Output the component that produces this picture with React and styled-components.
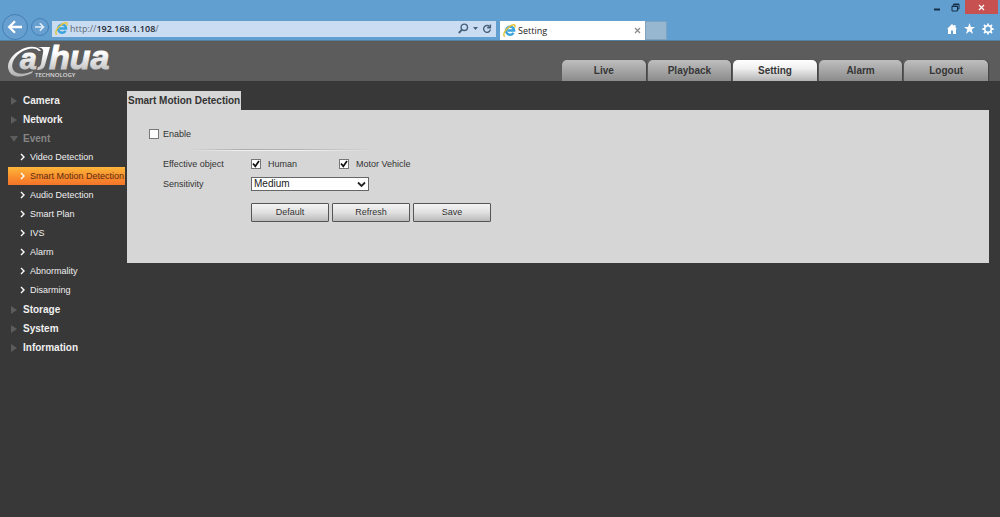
import React, { useState } from 'react'
import styled, { createGlobalStyle } from 'styled-components'

const menu = [
  { name: 'Camera' },
  { name: 'Network' },
  {
    name: 'Event',
    items: ['Video Detection', 'Smart Motion Detection', 'Audio Detection', 'Smart Plan', 'IVS', 'Alarm', 'Abnormality', 'Disarming'],
  },
  { name: 'Storage' },
  { name: 'System' },
  { name: 'Information' },
]

const tabs = ['Live', 'Playback', 'Setting', 'Alarm', 'Logout']

function IeIcon() {
  return (
    <svg width="13" height="13" viewBox="0 0 13 13" aria-hidden="true">
      <path d="M10.6 8.8a4.100 4.100 0 1 1 .6-2.300H4.400" fill="none" stroke="#3ba3dc" strokeWidth="2.300" />
      <path d="M2.200 11.800C.4 12.600.2 10.400 2 7.400 4 4 8.300 .8 10.800 .8c1.500 0 1.600 1.300 .8 2.800" fill="none" stroke="#e3c53c" strokeWidth="1.400" />
    </svg>
  )
}

function Logo() {
  return (
    <LogoSvg width="108" height="40" viewBox="0 0 108 40" role="img" aria-label="alhua technology">
      <defs>
        <linearGradient id="silver" gradientUnits="userSpaceOnUse" x1="0" y1="6" x2="0" y2="34">
          <stop offset="0.2" stopColor="#ffffff" />
          <stop offset="1" stopColor="#b4b4b4" />
        </linearGradient>
      </defs>
      <path
        d="M34 10C31 5 21 4 12 10 3 15-1 24 2 30c3 7 14 7 23 2l1-2c-7 3-15 4-19 0-4-5-1-13 6-18 7-5 15-6 19-2z"
        fill="url(#silver)"
      />
      <path d="M31 6h12l-5 18c-1 4-4 5-8 5l1-3c2 0 2-1 3-3l2-11c1-4-1-5-5-6z" fill="url(#silver)" />
      <LogoText x="13" y="28" $size={30}>a</LogoText>
      <LogoText x="42" y="28" $size={34}>hua</LogoText>
      <LogoSmall x="28" y="36">TECHNOLOGY</LogoSmall>
    </LogoSvg>
  )
}

function Check({ id, label, value, onChange, $tight }) {
  return (
    <CheckLabel htmlFor={id} $tight={$tight}>
      <CheckBox id={id} type="checkbox" checked={value} onChange={(e) => onChange(e.target.checked)} />
      {value && (
        <Tick width="10" height="10" viewBox="0 0 10 10">
          <path d="M2 4.500L4.300 7.300 8 2" fill="none" stroke="#111" strokeWidth="1.700" />
        </Tick>
      )}
      {label}
    </CheckLabel>
  )
}

function Browser() {
  return (
    <Chrome>
      <WindowBar>
        <WinButton aria-label="Minimize">
          <svg width="8" height="10" viewBox="0 0 8 10"><path d="M1 7.500h6" stroke="#17304a" strokeWidth="2" /></svg>
        </WinButton>
        <WinButton aria-label="Restore">
          <svg width="9" height="9" viewBox="0 0 9 9" fill="none" stroke="#17304a">
            <path d="M1 3h5.500v5H1zM2.500 2.500v-1.500h5.500v5h-1.500M1 3.500h5.500M2.500 1.500h5.500" />
          </svg>
        </WinButton>
        <WinButton $close aria-label="Close">
          <svg width="7" height="7" viewBox="0 0 7 7"><path d="M1 1l5 5M6 1L1 6" stroke="#fff" strokeWidth="1.300" /></svg>
        </WinButton>
      </WindowBar>
      <NavRow>
        <RoundButton $size={26} aria-label="Back">
          <svg width="16" height="14" viewBox="0 0 16 14" fill="none" stroke="#fff" strokeWidth="2.300"><path d="M15 7H2.500M8 1.200L2.200 7 8 12.800" /></svg>
        </RoundButton>
        <RoundButton $size={18} aria-label="Forward">
          <svg width="10" height="10" viewBox="0 0 10 10" fill="none" stroke="#e4eff9" strokeWidth="1.500"><path d="M0 5h8.500M4.800 1.200L8.600 5 4.800 8.800" /></svg>
        </RoundButton>
        <Address>
          <IeIcon />
          <Url>http://<b>192.168.1.108</b>/</Url>
          <AddressTools>
            <svg width="11" height="11" viewBox="0 0 11 11" fill="none" stroke="#45617c" strokeWidth="1.400"><circle cx="6.300" cy="4.300" r="3.200" /><path d="M4 6.700L.8 10" strokeWidth="1.800" /></svg>
            <svg width="5" height="4" viewBox="0 0 5 4"><path d="M0 0h5L2.500 3z" fill="#45617c" /></svg>
            <svg width="10" height="10" viewBox="0 0 10 10" fill="none" stroke="#45617c" strokeWidth="1.400"><path d="M7.600 2.700A3.400 3.400 0 1 0 8.400 5.500" /><path d="M8.400 .5v3.200H5.200" /></svg>
          </AddressTools>
        </Address>
        <PageTab>
          <IeIcon />
          <span>Setting</span>
          <TabClose aria-label="Close tab">
            <svg width="7" height="7" viewBox="0 0 7 7"><path d="M1 1l5 5M6 1L1 6" stroke="#8b8b8b" strokeWidth="1.300" /></svg>
          </TabClose>
        </PageTab>
        <NewTab aria-label="New tab" />
        <Tools>
          <svg width="10" height="10" viewBox="0 0 10 10" fill="#fff"><path d="M5 0L0 5h1v5h3V6.500h2V10h3V5h1L8.500 3.500V1H7v1z" /></svg>
          <svg width="11" height="11" viewBox="0 0 11 11" fill="#fff"><path d="M5.500 0l1.400 3.900H11L7.700 6.500 9 11 5.500 8.300 2 11l1.300-4.500L0 3.900h4.100z" /></svg>
          <svg width="12" height="12" viewBox="0 0 12 12" fill="none" stroke="#fff">
            <circle cx="6" cy="6" r="3.300" strokeWidth="1.600" />
            <path d="M6 .4v2M6 9.600v2M.4 6h2M9.600 6h2M2 2l1.400 1.400M8.600 8.600L10 10M10 2L8.600 3.400M3.400 8.600L2 10" strokeWidth="1.800" />
          </svg>
        </Tools>
      </NavRow>
    </Chrome>
  )
}

function SideMenu({ selected, onSelect }) {
  return (
    <Side>
      {menu.map((group) => (
        <React.Fragment key={group.name}>
          <GroupLink href="#" $open={!!group.items}>
            <svg width="8" height="8" viewBox="0 0 8 8">
              <path d={group.items ? 'M0 1h8L4 7z' : 'M1 0l6 4-6 4z'} fill="#5c5c5c" />
            </svg>
            {group.name}
          </GroupLink>
          {group.items && group.items.map((item) => (
            <ItemLink key={item} href="#" $active={item === selected} onClick={() => onSelect(item)}>
              <svg width="5" height="8" viewBox="0 0 5 8"><path d="M1 1l3 3-3 3" fill="none" stroke="#fff" strokeWidth="1.400" /></svg>
              {item}
            </ItemLink>
          ))}
        </React.Fragment>
      ))}
    </Side>
  )
}

function App() {
  const [tab, setTab] = useState('Setting')
  const [item, setItem] = useState('Smart Motion Detection')
  const [enable, setEnable] = useState(false)
  const [human, setHuman] = useState(true)
  const [vehicle, setVehicle] = useState(true)
  const [level, setLevel] = useState('Medium')

  return (
    <>
      <GlobalStyle />
      <Browser />
      <Header>
        <Logo />
        <MainTabs>
          {tabs.map((t) => (
            <MainTab key={t} $active={t === tab} onClick={() => setTab(t)}>{t}</MainTab>
          ))}
        </MainTabs>
      </Header>
      <Body>
        <SideMenu selected={item} onSelect={setItem} />
        <Content>
          <PanelTitle>Smart Motion Detection</PanelTitle>
          <Panel>
            <Check id="enable" label="Enable" value={enable} onChange={setEnable} $tight />
            <Divider />
            <Form>
              <span>Effective object</span>
              <Checks>
                <Check id="human" label="Human" value={human} onChange={setHuman} />
                <Check id="vehicle" label="Motor Vehicle" value={vehicle} onChange={setVehicle} />
              </Checks>
              <label htmlFor="sensitivity">Sensitivity</label>
              <SelectWrap>
                <Select id="sensitivity" value={level} onChange={(e) => setLevel(e.target.value)}>
                  <option>Low</option>
                  <option>Medium</option>
                  <option>High</option>
                </Select>
                <Arrow width="9" height="7" viewBox="0 0 9 7">
                  <path d="M1 1.500l3.500 3.500L8 1.500" fill="none" stroke="#222" strokeWidth="1.800" />
                </Arrow>
              </SelectWrap>
            </Form>
            <Buttons>
              <Button>Default</Button>
              <Button>Refresh</Button>
              <Button>Save</Button>
            </Buttons>
          </Panel>
        </Content>
      </Body>
    </>
  )
}

export default App

const GlobalStyle = createGlobalStyle`
  * {
    box-sizing: border-box;
  }
  body {
    margin: 0;
    background-color: #383838;
    font-family: "Liberation Sans", Arial, sans-serif;
    font-size: 9px;
  }
  button, select, input {
    font-family: inherit;
    margin: 0;
    padding: 0;
  }
  svg {
    flex-shrink: 0;
  }
`
const Chrome = styled.div`
  background-color: #629fd1;
  border-bottom: 1px solid #55819f;
  font-family: "Open Sans", "Noto Sans", sans-serif;
`
const WindowBar = styled.div`
  display: flex;
  justify-content: flex-end;
  height: 14px;
  padding-right: 2px;
`
const WinButton = styled.button`
  display: flex;
  align-items: center;
  justify-content: center;
  width: ${(p) => (p.$close ? '33px' : '19px')};
  height: 14px;
  border: none;
  background-color: ${(p) => (p.$close ? '#c75050' : 'transparent')};
`
const NavRow = styled.div`
  display: flex;
  align-items: center;
  height: 26px;
  padding-left: 2px;
`
const RoundButton = styled.button`
  display: flex;
  align-items: center;
  justify-content: center;
  width: ${(p) => p.$size}px;
  height: ${(p) => p.$size}px;
  margin-right: 3px;
  border: 1px solid #4480b4;
  border-radius: 50%;
  background-color: #679fd0;
`
const Address = styled.div`
  display: flex;
  align-items: center;
  flex: 0 1 444px;
  height: 16px;
  margin-top: 3px;
  padding: 0 4px 0 3px;
  background-color: #c9dcf1;
`
const Url = styled.span`
  margin-left: 2px;
  font-size: 9px;
  color: #5d6b7a;
  b {
    font-weight: 600;
    color: #1c2733;
  }
`
const AddressTools = styled.span`
  display: flex;
  align-items: center;
  gap: 4px;
  margin-left: auto;
`
const PageTab = styled.div`
  display: flex;
  align-items: center;
  flex: 0 1 145px;
  height: 19px;
  margin: 6px 0 0 4px;
  padding: 0 4px 0 3px;
  gap: 2px;
  background-color: #fff;
  font-size: 9px;
  color: #222;
`
const TabClose = styled.button`
  display: flex;
  margin-left: auto;
  border: none;
  background: none;
`
const NewTab = styled.button`
  width: 22px;
  height: 19px;
  margin-top: 6px;
  border: 1px solid #7fa3bf;
  background-color: #96b7cf;
`
const Tools = styled.div`
  display: flex;
  align-items: center;
  gap: 7px;
  margin-left: auto;
  padding: 3px 6px 0 0;
`
const Header = styled.header`
  display: flex;
  justify-content: space-between;
  align-items: flex-end;
  height: 40px;
  padding: 0 12px 0 7px;
  background-color: #5c5c5c;
`
const LogoSvg = styled.svg`
  overflow: visible;
`
const LogoText = styled.text`
  font-family: "Liberation Sans", Arial, sans-serif;
  font-size: ${(p) => p.$size}px;
  font-weight: bold;
  font-style: italic;
  fill: url(#silver);
  stroke: url(#silver);
  stroke-width: 1px;
`
const LogoSmall = styled.text`
  font-family: "Open Sans", sans-serif;
  font-size: 6px;
  font-weight: 600;
  fill: #ddd;
`
const MainTabs = styled.nav`
  display: flex;
  gap: 2px;
  width: 426px;
`
const MainTab = styled.button`
  flex: 1;
  height: 21px;
  border: none;
  border-radius: 5px 5px 0 0;
  background: ${(p) => (p.$active ? 'linear-gradient(#fff, #f0f0f0 40%, #b4b4b4)' : 'linear-gradient(#bebebe, #a8a8a8 45%, #8b8b8b)')};
  box-shadow: 1px 0 1px #444;
  font-size: 10px;
  font-weight: bold;
  color: #363636;
  cursor: pointer;
`
const Body = styled.div`
  display: flex;
  padding: 10px 11px 10px 8px;
`
const Side = styled.nav`
  display: flex;
  flex-direction: column;
  flex: 0 0 119px;
  padding-right: 2px;
`
const GroupLink = styled.a`
  display: flex;
  align-items: center;
  gap: 5px;
  height: 19px;
  padding-left: 2px;
  font-size: 10px;
  font-weight: bold;
  text-decoration: none;
  color: ${(p) => (p.$open ? '#868686' : '#efefef')};
`
const ItemLink = styled.a`
  display: flex;
  align-items: center;
  gap: 5px;
  height: 18px;
  margin-bottom: 1px;
  padding-left: 12px;
  text-decoration: none;
  white-space: nowrap;
  color: ${(p) => (p.$active ? '#5b2c10' : '#efefef')};
  background: ${(p) => (p.$active ? 'linear-gradient(#fdb73c, #f98b2c 60%, #f3752a)' : 'none')};
`
const Content = styled.main`
  flex: 1;
`
const PanelTitle = styled.h1`
  width: fit-content;
  margin: 0;
  padding: 0 1px;
  font-size: 10px;
  line-height: 19px;
  background-color: #d6d6d6;
  color: #333;
`
const Panel = styled.section`
  padding: 18px 22px 41px;
  background-color: #d6d6d6;
  color: #333;
`
const CheckLabel = styled.label`
  position: relative;
  display: flex;
  align-items: center;
  gap: ${(p) => (p.$tight ? '4px' : '7px')};
  width: 88px;
  height: 12px;
  white-space: nowrap;
`
const CheckBox = styled.input`
  appearance: none;
  flex-shrink: 0;
  width: 10px;
  height: 10px;
  border: 1px solid #777;
  background-color: #fff;
`
const Tick = styled.svg`
  position: absolute;
  left: 0;
  top: 1px;
  pointer-events: none;
`
const Divider = styled.hr`
  width: 186px;
  height: 2px;
  margin: 9px 0 3px 40px;
  border: none;
  background:
    linear-gradient(90deg, #d6d6d6, #aaa 30%, #b4b4b4 60%, #d6d6d6) top / 100% 1px no-repeat,
    linear-gradient(90deg, #d6d6d6, #f2f2f2 30%, #f2f2f2 60%, #d6d6d6);
`
const Form = styled.div`
  display: grid;
  grid-template-columns: 88px 1fr;
  grid-auto-rows: 20px;
  align-items: center;
  padding-left: 14px;
`
const Checks = styled.div`
  display: flex;
`
const SelectWrap = styled.div`
  position: relative;
  display: flex;
  width: 118px;
`
const Select = styled.select`
  appearance: none;
  width: 100%;
  height: 14px;
  padding-left: 2px;
  border: 1px solid #666;
  border-radius: 0;
  background-color: #fff;
  font-size: 10px;
  line-height: 12px;
  color: #222;
`
const Arrow = styled.svg`
  position: absolute;
  right: 3px;
  top: 4px;
  pointer-events: none;
`
const Buttons = styled.div`
  display: flex;
  gap: 3px;
  margin-top: 9px;
  padding-left: 102px;
`
const Button = styled.button`
  width: 78px;
  height: 19px;
  padding-bottom: 1px;
  border: 1px solid #555;
  border-radius: 1px;
  background: linear-gradient(#f4f4f4, #e0e0e0 50%, #bababa);
  font-size: 9px;
  color: #333;
  cursor: pointer;
`
